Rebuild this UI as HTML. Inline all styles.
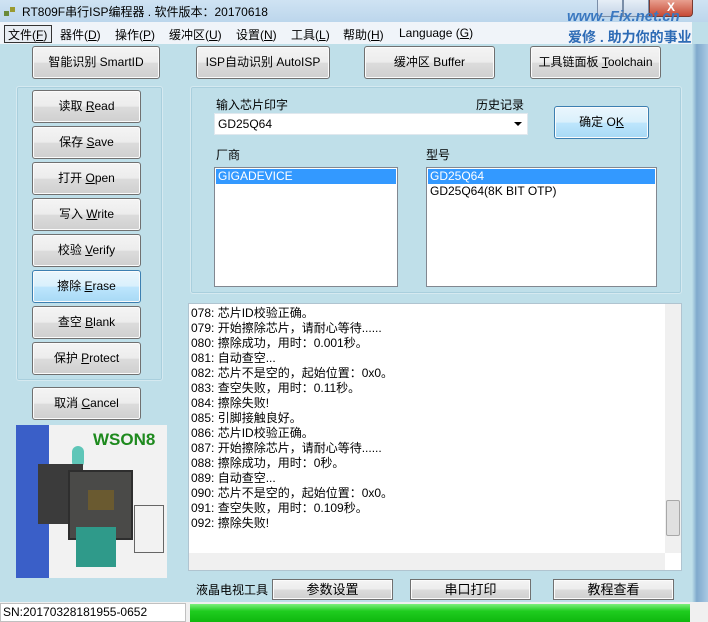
<!DOCTYPE html>
<html><head><meta charset="utf-8"><style>
*{box-sizing:border-box;margin:0;padding:0}
body{width:708px;height:622px;overflow:hidden;background:#bfdfe9;font-family:"Liberation Sans","Noto Sans CJK SC",sans-serif;font-size:12px;color:#000;position:relative}
.a{position:absolute}
.btn{position:absolute;border:1px solid #707070;border-radius:3px;background:linear-gradient(#f4f4f4,#ececec 50%,#dcdcdc 51%,#cfcfcf);text-align:center;box-shadow:inset 0 0 0 1px #fbfbfb}
.grp{position:absolute;border:1px solid #d5e9f0;border-radius:3px;box-shadow:inset 0 0 0 1px #a9cfdd}
.u{text-decoration:underline}
.list{position:absolute;background:#fff;border:1px solid #828790}
.sel{background:#3399ff;color:#fff;height:15px;line-height:15px;padding-left:2px}
</style></head><body>
<!-- title bar -->
<div class="a" style="left:0;top:0;width:708px;height:22px;background:linear-gradient(#cfe3f3,#bcd6ec)"></div>
<div class="a" style="left:4px;top:5px;width:12px;height:12px;">
<div class="a" style="left:0;top:6px;width:5px;height:5px;background:#6a8a3a"></div><div class="a" style="left:6px;top:2px;width:5px;height:5px;background:#9a9a30"></div></div>
<div class="a" style="left:22px;top:3px;font-size:12px">RT809F串行ISP编程器 . 软件版本：20170618</div>
<div class="a" style="left:597px;top:0;width:26px;height:17px;border:1px solid #7a8ea8;border-top:none;border-radius:0 0 0 4px;background:linear-gradient(#e6eef7,#c4d4e6)"></div>
<div class="a" style="left:623px;top:0;width:26px;height:17px;border:1px solid #7a8ea8;border-top:none;background:linear-gradient(#e6eef7,#c4d4e6)"></div>
<div class="a" style="left:649px;top:0;width:44px;height:17px;border:1px solid #7a3a30;border-top:none;border-radius:0 0 4px 0;background:linear-gradient(#e8a090,#c74a35);color:#fff;text-align:center;font-weight:bold;line-height:15px">X</div>
<!-- menu bar -->
<div class="a" style="left:0;top:22px;width:692px;height:22px;background:#f0f4f9"></div>
<div class="a" style="left:4px;top:25px;width:48px;height:18px;border:1px solid #333;background:#e8edf3"></div>
<div class="a" style="left:8px;top:26px;font-size:12px;word-spacing:0">文件(<span class="u">F</span>)</div>
<div class="a" style="left:60px;top:26px">器件(<span class="u">D</span>)</div>
<div class="a" style="left:115px;top:26px">操作(<span class="u">P</span>)</div>
<div class="a" style="left:169px;top:26px">缓冲区(<span class="u">U</span>)</div>
<div class="a" style="left:236px;top:26px">设置(<span class="u">N</span>)</div>
<div class="a" style="left:291px;top:26px">工具(<span class="u">L</span>)</div>
<div class="a" style="left:343px;top:26px">帮助(<span class="u">H</span>)</div>
<div class="a" style="left:399px;top:26px">Language (<span class="u">G</span>)</div>
<div class="a" style="left:567px;top:8px;font-size:15px;font-style:italic;color:#3a78c0;font-weight:bold">www. Fix.net.cn</div>
<div class="a" style="left:568px;top:27px;font-size:14px;font-weight:bold;color:#2d6bb5">爱修 . 助力你的事业</div>
<!-- right frame -->
<div class="a" style="left:692px;top:44px;width:16px;height:578px;background:linear-gradient(90deg,#bfdfe9,#7fa9cc 30%,#a9c9e3)"></div>
<!-- toolbar -->
<div class="btn" style="left:32px;top:46px;width:128px;height:33px;line-height:31px">智能识别 SmartID</div>
<div class="btn" style="left:196px;top:46px;width:134px;height:33px;line-height:31px">ISP自动识别 AutoISP</div>
<div class="btn" style="left:364px;top:46px;width:131px;height:33px;line-height:31px">缓冲区 Buffer</div>
<div class="btn" style="left:530px;top:46px;width:131px;height:33px;line-height:31px">工具链面板 <span class="u">T</span>oolchain</div>
<!-- left group -->
<div class="grp" style="left:16px;top:86px;width:147px;height:295px"></div>
<div class="btn" style="left:32px;top:90px;width:109px;height:33px;line-height:31px">读取 <span class="u">R</span>ead</div>
<div class="btn" style="left:32px;top:126px;width:109px;height:33px;line-height:31px">保存 <span class="u">S</span>ave</div>
<div class="btn" style="left:32px;top:162px;width:109px;height:33px;line-height:31px">打开 <span class="u">O</span>pen</div>
<div class="btn" style="left:32px;top:198px;width:109px;height:33px;line-height:31px">写入 <span class="u">W</span>rite</div>
<div class="btn" style="left:32px;top:234px;width:109px;height:33px;line-height:31px">校验 <span class="u">V</span>erify</div>
<div class="btn" style="left:32px;top:270px;width:109px;height:33px;line-height:31px;border-color:#3c7fb1;background:linear-gradient(#eaf6fd,#d9f0fc 50%,#bee6fd 51%,#a7d9f5)">擦除 <span class="u">E</span>rase</div>
<div class="btn" style="left:32px;top:306px;width:109px;height:33px;line-height:31px">查空 <span class="u">B</span>lank</div>
<div class="btn" style="left:32px;top:342px;width:109px;height:33px;line-height:31px">保护 <span class="u">P</span>rotect</div>
<div class="btn" style="left:32px;top:387px;width:109px;height:33px;line-height:31px">取消 <span class="u">C</span>ancel</div>
<!-- image -->
<div class="a" style="left:16px;top:425px;width:151px;height:153px;background:#f2f2f2"></div>
<div class="a" style="left:16px;top:425px;width:33px;height:153px;background:#3a5fc8"></div>
<div class="a" style="left:93px;top:430px;font-size:17px;font-weight:bold;color:#1e8a1e">WSON8</div>
<div class="a" style="left:72px;top:446px;width:12px;height:22px;border-radius:6px;background:#5fc6b8"></div>
<div class="a" style="left:38px;top:464px;width:45px;height:60px;background:#3b3b3b"></div>
<div class="a" style="left:68px;top:470px;width:65px;height:70px;background:#4a4a48;border:2px solid #2e2e2e"></div>
<div class="a" style="left:88px;top:490px;width:26px;height:20px;background:#6a5a30"></div>
<div class="a" style="left:76px;top:527px;width:40px;height:40px;background:#2f9a8a"></div>
<div class="a" style="left:134px;top:505px;width:30px;height:48px;border:1px solid #666"></div>
<!-- top right group -->
<div class="grp" style="left:190px;top:86px;width:492px;height:208px"></div>
<div class="a" style="left:216px;top:96px">输入芯片印字</div>
<div class="a" style="left:476px;top:96px">历史记录</div>
<div class="a" style="left:214px;top:113px;width:314px;height:22px;background:#fff;border:1px solid #e0e8ee"></div>
<div class="a" style="left:218px;top:117px">GD25Q64</div>
<div class="a" style="left:514px;top:122px;border-left:4px solid transparent;border-right:4px solid transparent;border-top:4px solid #000"></div>
<div class="btn" style="left:554px;top:106px;width:95px;height:33px;line-height:31px;border-color:#3c7fb1;background:linear-gradient(#eaf6fd,#d9f0fc 50%,#bee6fd 51%,#a7d9f5)">确定 O<span class="u">K</span></div>
<div class="a" style="left:216px;top:146px">厂商</div>
<div class="a" style="left:426px;top:146px">型号</div>
<div class="list" style="left:214px;top:167px;width:184px;height:120px;padding:1px"><div class="sel">GIGADEVICE</div></div>
<div class="list" style="left:426px;top:167px;width:231px;height:120px;padding:1px"><div class="sel">GD25Q64</div><div style="padding-left:2px;line-height:15px">GD25Q64(8K BIT OTP)</div></div>
<!-- log -->
<div class="a" style="left:188px;top:303px;width:494px;height:268px;background:#fff;border:1px solid #b0c4d0"></div>
<div class="a" style="left:191px;top:306px;line-height:15px;font-size:12px;white-space:pre">078: 芯片ID校验正确。
079: 开始擦除芯片，请耐心等待......
080: 擦除成功，用时：0.001秒。
081: 自动查空...
082: 芯片不是空的，起始位置：0x0。
083: 查空失败，用时：0.11秒。
084: 擦除失败!
085: 引脚接触良好。
086: 芯片ID校验正确。
087: 开始擦除芯片，请耐心等待......
088: 擦除成功，用时：0秒。
089: 自动查空...
090: 芯片不是空的，起始位置：0x0。
091: 查空失败，用时：0.109秒。
092: 擦除失败!</div>
<div class="a" style="left:665px;top:304px;width:16px;height:249px;background:#f0f0f0"></div>
<div class="a" style="left:666px;top:500px;width:14px;height:36px;background:#e0e0e0;border:1px solid #a8a8a8;border-radius:2px"></div>
<div class="a" style="left:189px;top:553px;width:476px;height:17px;background:#f0f0f0"></div>
<!-- bottom row -->
<div class="a" style="left:196px;top:581px">液晶电视工具</div>
<div class="btn" style="left:272px;top:579px;width:121px;height:21px;line-height:19px;border-radius:0;font-size:13px">参数设置</div>
<div class="btn" style="left:410px;top:579px;width:121px;height:21px;line-height:19px;border-radius:0;font-size:13px">串口打印</div>
<div class="btn" style="left:553px;top:579px;width:121px;height:21px;line-height:19px;border-radius:0;font-size:13px">教程查看</div>
<!-- status -->
<div class="a" style="left:0;top:602px;width:708px;height:20px;background:#f0f0f0"></div>
<div class="a" style="left:0;top:603px;width:186px;height:19px;background:#fff;border:1px solid #c0c0c0"></div>
<div class="a" style="left:3px;top:605px;font-size:12px">SN:20170328181955-0652</div>
<div class="a" style="left:190px;top:604px;width:500px;height:18px;background:linear-gradient(#7ef07e,#1fcc1f 40%,#0fb80f)"></div>
</body></html>
